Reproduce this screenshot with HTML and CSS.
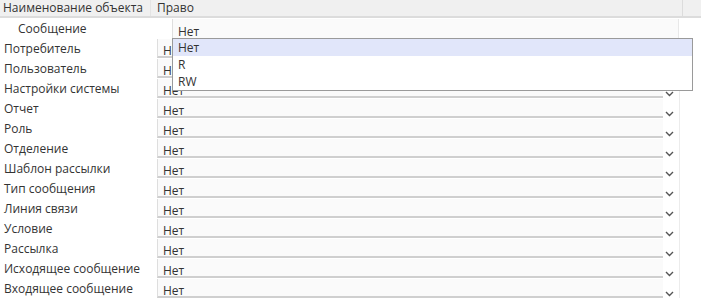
FILE: index.html
```html
<!DOCTYPE html>
<html lang="ru">
<head>
    <meta charset="UTF-8">
    <title>Права</title>
    <link rel="stylesheet" href="styles.css">
</head>
<body>
    <div class="grid">
        <div class="head">
            <div class="head-name">Наименование объекта</div>
            <div class="head-right">Право</div>
            <div class="head-scroll"></div>
        </div>

        <!-- открытая строка -->
        <div class="row">
            <div class="name sub">Сообщение</div>
            <div class="cell open">
                <div class="sel open-sel">Нет</div>
            </div>
        </div>

        <div class="row"><div class="name">Потребитель</div><div class="cell"><div class="sel">Нет</div><div class="arrow"></div></div></div>
        <div class="row"><div class="name">Пользователь</div><div class="cell"><div class="sel">Нет</div><div class="arrow"></div></div></div>
        <div class="row"><div class="name">Настройки системы</div><div class="cell"><div class="sel">Нет</div><div class="arrow"><svg width="9" height="6" viewBox="0 0 9 6"><polyline points="1,1 4.5,4.5 8,1" /></svg></div></div></div>
        <div class="row"><div class="name">Отчет</div><div class="cell"><div class="sel">Нет</div><div class="arrow"><svg width="9" height="6" viewBox="0 0 9 6"><polyline points="1,1 4.5,4.5 8,1" /></svg></div></div></div>
        <div class="row"><div class="name">Роль</div><div class="cell"><div class="sel">Нет</div><div class="arrow"><svg width="9" height="6" viewBox="0 0 9 6"><polyline points="1,1 4.5,4.5 8,1" /></svg></div></div></div>
        <div class="row"><div class="name">Отделение</div><div class="cell"><div class="sel">Нет</div><div class="arrow"><svg width="9" height="6" viewBox="0 0 9 6"><polyline points="1,1 4.5,4.5 8,1" /></svg></div></div></div>
        <div class="row"><div class="name">Шаблон рассылки</div><div class="cell"><div class="sel">Нет</div><div class="arrow"><svg width="9" height="6" viewBox="0 0 9 6"><polyline points="1,1 4.5,4.5 8,1" /></svg></div></div></div>
        <div class="row"><div class="name">Тип сообщения</div><div class="cell"><div class="sel">Нет</div><div class="arrow"><svg width="9" height="6" viewBox="0 0 9 6"><polyline points="1,1 4.5,4.5 8,1" /></svg></div></div></div>
        <div class="row"><div class="name">Линия связи</div><div class="cell"><div class="sel">Нет</div><div class="arrow"><svg width="9" height="6" viewBox="0 0 9 6"><polyline points="1,1 4.5,4.5 8,1" /></svg></div></div></div>
        <div class="row"><div class="name">Условие</div><div class="cell"><div class="sel">Нет</div><div class="arrow"><svg width="9" height="6" viewBox="0 0 9 6"><polyline points="1,1 4.5,4.5 8,1" /></svg></div></div></div>
        <div class="row"><div class="name">Рассылка</div><div class="cell"><div class="sel">Нет</div><div class="arrow"><svg width="9" height="6" viewBox="0 0 9 6"><polyline points="1,1 4.5,4.5 8,1" /></svg></div></div></div>
        <div class="row"><div class="name">Исходящее сообщение</div><div class="cell"><div class="sel">Нет</div><div class="arrow"><svg width="9" height="6" viewBox="0 0 9 6"><polyline points="1,1 4.5,4.5 8,1" /></svg></div></div></div>
        <div class="row"><div class="name">Входящее сообщение</div><div class="cell"><div class="sel">Нет</div><div class="arrow"><svg width="9" height="6" viewBox="0 0 9 6"><polyline points="1,1 4.5,4.5 8,1" /></svg></div></div></div>

        <!-- выпадающий список -->
        <ul class="dropdown">
            <li class="active">Нет</li>
            <li>R</li>
            <li>RW</li>
        </ul>
    </div>
</body>
</html>
```

FILE: styles.css
```css
body, html {
    margin: 0;
    padding: 0;
    background: #fff;
    font-family: "Open Sans", "DejaVu Sans", sans-serif;
    font-size: 12px;
    color: #333;
}
.grid {
    position: relative;
    width: 701px;
}
.head {
    display: flex;
    height: 16px;
    background: #f0f0f0;
    border-bottom: 2px solid #dcdcdc;
    line-height: 16px;
}
.head-name {
    width: 147px;
    padding-left: 3px;
    border-right: 1px solid #e4e4e4;
}
.head-right {
    flex: 1;
    padding-left: 6px;
    border-right: 1px solid #dcdcdc;
}
.head-scroll {
    width: 18px;
}
.row {
    display: flex;
    height: 20px;
}
.name {
    width: 146px;
    padding-left: 4px;
    padding-top: 1px;
    line-height: 19px;
    white-space: nowrap;
}
.name.sub {
    padding-left: 18px;
    width: 132px;
}
.cell {
    display: flex;
    margin-left: 7px;
}
.cell.open {
    margin-left: 22px;
}
.sel {
    width: 500px;
    height: 13px;
    margin-top: 1px;
    padding: 4px 0 0 5px;
    background: #fafafa;
    border-left: 1px solid #dedede;
    border-bottom: 2px solid #cfcfcf;
    line-height: 15px;
}
.open-sel {
    width: 500px;
    height: 13px;
    padding-top: 6px;
    border-bottom: none;
    border-right: 1px solid #e8e8e8;
    line-height: 14px;
}
.arrow {
    width: 14px;
    padding-left: 2px;
    border-right: 1px solid #ececec;
    display: flex;
    align-items: flex-end;
    padding-bottom: 1px;
}
.arrow svg polyline {
    fill: none;
    stroke: #555;
    stroke-width: 1.4;
}
.dropdown {
    position: absolute;
    left: 172px;
    top: 38px;
    width: 519px;
    margin: 0;
    padding: 0;
    list-style: none;
    background: #fff;
    border: 1px solid #9a9a9a;
}
.dropdown li {
    height: 17px;
    line-height: 17px;
    padding-left: 5px;
}
.dropdown li.active {
    background: #e1e6fa;
}
```
